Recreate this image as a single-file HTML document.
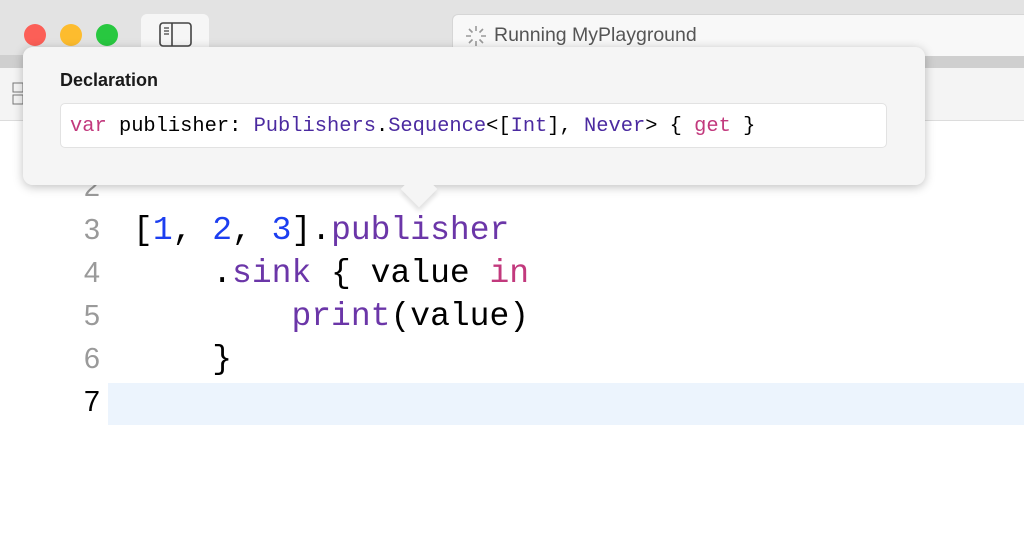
<!DOCTYPE html>
<html><head><meta charset="utf-8"><style>
body{margin:0;width:1024px;height:556px;overflow:hidden;background:#fff;font-family:"Liberation Sans",sans-serif;position:relative}
.top{position:absolute;left:0;top:0;width:1024px;height:55px;background:#e3e3e3}
.strip{position:absolute;left:0;top:55px;width:1024px;height:13px;background:#cfcfcf}
.bar{position:absolute;left:0;top:68px;width:1024px;height:52px;background:#f4f4f4;border-bottom:1px solid #dcdcdc}
.dot{position:absolute;top:24px;width:22px;height:22px;border-radius:50%}
.tab{position:absolute;left:141px;top:14px;width:68px;height:41px;background:#f6f6f6;border-radius:6px 6px 0 0}
.run{position:absolute;left:452px;top:14px;width:580px;height:41px;background:#f8f8f8;border-radius:6px 0 0 0;border:1px solid #d6d6d6;border-bottom:none}
.pop{position:absolute;left:23px;top:47px;width:902px;height:138px;background:#f5f5f5;border-radius:10px;box-shadow:0 2px 10px rgba(0,0,0,.25)}
.arrow{position:absolute;left:406px;top:176px;width:26px;height:26px;background:#f5f5f5;transform:rotate(45deg);box-shadow:3px 3px 5px rgba(0,0,0,.12)}
.decl{position:absolute;left:60px;top:70px;font-weight:bold;font-size:18px;color:#1a1a1a}
.box{position:absolute;left:60px;top:103px;width:827px;height:45px;background:#fff;border:1px solid #e2e2e2;border-radius:5px;font-family:"Liberation Mono",monospace;font-size:20.4px;line-height:45px;padding-left:9px;box-sizing:border-box;white-space:pre;color:#000}
.k{color:#c2397d}.t{color:#4b2aa0}.p{color:#6b36a8}.n{color:#1c3ef0}
.code{position:absolute;left:133px;top:209px;font-family:"Liberation Mono",monospace;font-size:33px;line-height:43px;white-space:pre;color:#000}
.ln{position:absolute;left:60px;top:209px;width:40px;text-align:right;font-family:"Liberation Sans",sans-serif;font-size:29px;line-height:43px;color:#9a9a9a}
.hl{position:absolute;left:108px;top:383px;width:916px;height:42px;background:#ecf4fd}
</style></head><body>
<div class="top"></div><div class="strip"></div><div class="bar"></div>
<div class="dot" style="left:24px;background:#fc5f57"></div>
<div class="dot" style="left:60px;background:#fdbc2e"></div>
<div class="dot" style="left:96px;background:#28c840"></div>
<div class="tab"><svg width="68" height="41"><rect x="19" y="9" width="31" height="23" rx="3" fill="none" stroke="#444" stroke-width="1.6"/><line x1="31" y1="9" x2="31" y2="32" stroke="#444" stroke-width="1.6"/><path d="M23 14h5M23 17h5M23 20h5" stroke="#444" stroke-width="1.2"/></svg></div>
<div class="run"><svg width="26" height="26" style="position:absolute;left:10px;top:8px" stroke="#999" stroke-width="1.6"><path d="M13 3v5M13 18v5M3 13h5M18 13h5M6 6l3.5 3.5M16.5 16.5L20 20M20 6l-3.5 3.5M9.5 16.5L6 20"/></svg><span style="position:absolute;left:41px;top:9px;font-size:19.5px;color:#555">Running MyPlayground</span></div>
<svg style="position:absolute;left:12px;top:82px" width="14" height="24"><rect x="1" y="1" width="10" height="9" fill="none" stroke="#777"/><rect x="1" y="13" width="10" height="9" fill="none" stroke="#777"/></svg>
<div class="hl"></div>
<div class="ln" style="top:166px">2</div>
<div class="ln">3<br>4<br>5<br>6<br><span style="color:#000">7</span></div>
<div class="code">[<span class="n">1</span>, <span class="n">2</span>, <span class="n">3</span>].<span class="p">publisher</span>
    .<span class="p">sink</span> { value <span class="k">in</span>
        <span class="p">print</span>(value)
    }</div>
<div class="pop"></div><div class="arrow"></div>
<div class="pop" style="box-shadow:none"></div>
<div class="decl">Declaration</div>
<div class="box"><span class="k">var</span> publisher: <span class="t">Publishers</span>.<span class="t">Sequence</span>&lt;[<span class="t">Int</span>], <span class="t">Never</span>&gt; { <span class="k">get</span> }</div>
</body></html>
